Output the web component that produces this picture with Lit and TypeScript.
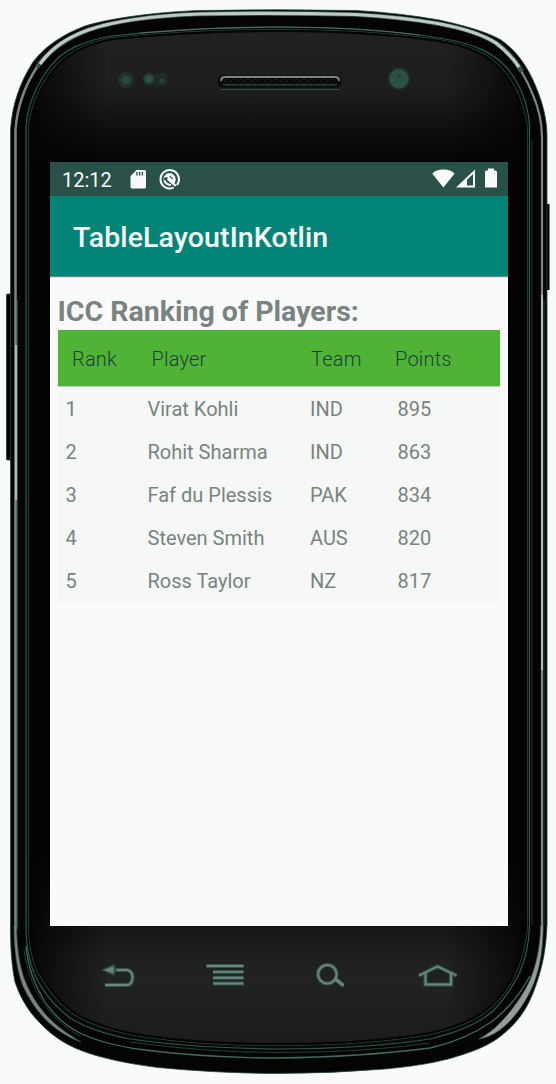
import { LitElement, html, css, svg } from "lit";
import { customElement } from "lit/decorators.js";

interface Player {
  rank: number;
  name: string;
  team: string;
  points: number;
}

const PLAYERS: Player[] = [
  { rank: 1, name: "Virat Kohli", team: "IND", points: 895 },
  { rank: 2, name: "Rohit Sharma", team: "IND", points: 863 },
  { rank: 3, name: "Faf du Plessis", team: "PAK", points: 834 },
  { rank: 4, name: "Steven Smith", team: "AUS", points: 820 },
  { rank: 5, name: "Ross Taylor", team: "NZ", points: 817 },
];

const OUTER =
  "M10.5 130C12 105 20 82 33 62C46 45 64 34 85 26C115 17 160 12 200 10.5Q278 9 356 10.5Q400 13 439 20C462 25 485 31 501 40C520 53 531 73 538 92C543 105 547 120 547 136V925C546 948 543 965 536 985C530 1002 524 1014 511 1027C500 1038 488 1046 470 1052C445 1061 425 1065 385 1069Q330 1073.5 275 1073.5Q215 1073 158 1067.5C130 1064 106 1059 88 1053C70 1047 54 1038 40 1023C28 1011 20 997 15 982C12 967 10.5 950 10.5 930Z";
const RIM =
  "M26 150V128C27 108 35 87 49 68C62 50 83 41 112 36Q190 27 278 27Q370 27 440 38C475 44 493 52 508 69C520 84 528 104 529.5 125V925C529 945 526 959 519 974C511 990 504 1000 493 1011C479 1023 460 1032 430 1039Q365 1049 278 1049Q190 1048 130 1039C104 1034 86 1028 70 1018C53 1005 41 989 34 973C29 960 26.5 950 26 932Z";
const FACE =
  "M30 150V130C31 111 39 90 53 71C66 54 86 44 114 39Q190 31 278 31Q368 31 438 41C472 47 490 56 504 73C517 90 524 110 526 130V920C526 942 521 959 512 978C504 994 495 1003 482 1013C468 1022 452 1028 430 1033Q365 1044 278 1044Q192 1044 130 1033C106 1028 88 1022 73 1012C57 1000 46 985 38 969C32 955 30 942 30 925Z";

@customElement("phone-body")
class PhoneBody extends LitElement {
  static styles = css`
    :host { display: block; width: 556px; height: 1084px; }
    svg { display: block; }
  `;
  render() {
    const slots = Array.from({ length: 16 }, (_, i) => 227 + i * 7);
    return html`<svg width="556" height="1084" viewBox="0 0 556 1084" fill="none">
      <defs>
        <linearGradient id="top" x1="0" y1="30" x2="0" y2="162" gradientUnits="userSpaceOnUse">
          <stop offset="0" stop-color="#202120" /><stop offset=".46" stop-color="#1d1d1d" />
          <stop offset=".75" stop-color="#0f0f0f" /><stop offset="1" stop-color="#040404" />
        </linearGradient>
        <linearGradient id="bottom" x1="0" y1="860" x2="0" y2="1046" gradientUnits="userSpaceOnUse">
          <stop offset="0" stop-color="#040404" /><stop offset=".4" stop-color="#181818" />
          <stop offset=".5" stop-color="#1e1e1e" /><stop offset=".65" stop-color="#202322" />
          <stop offset=".85" stop-color="#1e1e1e" /><stop offset="1" stop-color="#1c1c1c" />
        </linearGradient>
        <linearGradient id="sides" x1="28" y1="0" x2="527" y2="0" gradientUnits="userSpaceOnUse">
          <stop offset="0" stop-color="#030303" /><stop offset=".03" stop-color="#030303" stop-opacity=".7" />
          <stop offset=".16" stop-color="#030303" stop-opacity="0" /><stop offset=".84" stop-color="#030303" stop-opacity="0" />
          <stop offset=".97" stop-color="#030303" stop-opacity=".7" /><stop offset="1" stop-color="#030303" />
        </linearGradient>
        <clipPath id="upper"><rect width="556" height="162" /></clipPath>
        <clipPath id="lower"><rect y="860" width="556" height="224" /></clipPath>
      </defs>
      <rect x="6.5" y="294" width="8" height="166" rx="1" fill="#040404" stroke="#1c3630" stroke-width=".8" />
      <rect x="542" y="204" width="7.5" height="86" rx="1" fill="#040404" />
      <path d="M549.5 204V290" stroke="#777f7c" />
      <path d=${OUTER} fill="#040404" stroke="#26473f" stroke-width=".8" />
      <path d="M15.5 930V130C17 108 24 87 37 67C50 49 67 38 88 30C117 20 160 15 200 14" stroke="#7b8582" stroke-width="2.5" />
      <path d="M542 930V138C542 122 539 109 533 95C526 77 515 58 496 43" stroke="#7b8582" stroke-width="2.2" />
      <path d="M37 67C50 49 67 38 88 30C117 20 160 15.5 200 14Q278 12.5 356 14.5Q400 17 438 23.5C462 28 482 34 496 43Q512 54 522 72" stroke="#35574f" stroke-width="4.6" />
      <path d="M40 64C53 46 69 37 88 30C117 20 160 15.5 200 14Q278 12.5 356 14.5Q400 17 438 23.5C462 28 482 34 496 43Q510 54 519 67" stroke="#c0c8c5" stroke-width="3.2" />
      <path d="M16 345V500M542 295V670" stroke="#b6c0bc" stroke-width="1.8" />
      <path d="M17.5 300V930M544 300V925" stroke="#24463e" />
      <path d="M14 925C14 951 17 971 23 986C29 999 37 1011 47 1021C57 1030 67 1037 81 1042C66 1033 55 1025 46 1015C36 1003 29 992 24 978C19 963 17 948 16.5 925Z" fill="#7b8582" stroke="#345d54" stroke-width=".6" />
      <path d="M540.7 925C540 947 537 963 530 980C523 995 514 1008 501 1022C494 1029 488 1034 479 1039C491 1037 500 1031 510 1021C523 1007 531 992 536 977C541 962 543 946 543.2 925Z" fill="#929c98" stroke="#345d54" stroke-width=".6" />
      <path d="M26 946C28 966 33 982 45 1002C54 1015 66 1026 80 1033C96 1041 112 1045 137 1049Q205 1058 278 1058Q360 1057 430 1048C452 1043 474 1034 491 1022C508 1010 520 994 530 976" stroke="#426a61" stroke-width="1.3" />
      <path d="M24 950C27 973 35 992 48 1009C57 1020 66 1028 80 1036" stroke="#203f38" />
      <path d="M130 1042Q205 1052.5 278 1052.5Q365 1052.5 430 1043" stroke="#203f38" />
      <path d=${RIM} fill="#080a09" stroke="#2c584f" stroke-width="1.2" />
      <path d=${FACE} fill="#030303" stroke="#234a41" stroke-width="4" />
      <path d=${FACE} fill="#030303" stroke="#050505" stroke-width="2.4" />
      <path d=${FACE} fill="url(#top)" clip-path="url(#upper)" />
      <path d=${FACE} fill="url(#bottom)" clip-path="url(#lower)" />
      <path d=${FACE} fill="url(#sides)" stroke="#050505" stroke-width="2" />
      <path d="M532 140V925" stroke="#1e1e1e" stroke-width="1.5" />
      <path d="M140 33Q210 27 278 27Q360 27 420 35" stroke="#64716d" stroke-width=".8" />
      <circle cx="126" cy="80" r="8" fill="#22312d" /><circle cx="126" cy="80" r="4" fill="#294a42" />
      <circle cx="149" cy="79" r="6" fill="#253c36" /><circle cx="149" cy="79" r="3.5" fill="#2a5148" />
      <rect x="155" y="73" width="12" height="13" fill="#202a27" /><circle cx="162" cy="81" r="2.5" fill="#28423b" />
      <circle cx="399" cy="78.5" r="11" fill="#22332f" /><circle cx="399" cy="78.8" r="9.5" fill="#2a5148" />
      <circle cx="399.5" cy="76" r="2.6" fill="#254039" stroke="#31554c" />
      <rect x="218" y="75.5" width="123" height="12" rx="5" fill="#080808" />
      <path d="M221 81Q221 77 225 77H335Q339 77 339 81" stroke="#7b8582" stroke-width="2" />
      <path d="M223 84.8H337M221 89.5H339" stroke="#2a5148" stroke-width="1.2" />
      ${slots.map((x) => svg`<ellipse cx=${x} cy="81.2" rx="2.4" ry="1.9" fill="#000" stroke="#242424" stroke-width=".8" />`)}
    </svg>`;
  }
}

@customElement("status-bar")
class StatusBar extends LitElement {
  static styles = css`
    :host { display: flex; box-sizing: border-box; height: 34px; padding: 0 11px 0 12px; align-items: center; background: #295149; color: #f9fbfa; }
    .clock { font-size: 20px; line-height: 34px; width: 67px; padding-top: 2px; }
    .space { flex: 1; }
    svg { display: block; }
  `;
  render() {
    return html`<span class="clock">12:12</span>
      <svg width="60" height="34" fill="none">
        <path d="M7.5 8H15.5Q17 8 17 9.5V25Q17 26.5 15.5 26.5H3Q1.5 26.5 1.5 25V14Z" fill="#f9fbfa" />
        <path d="M8 10V13.5M10.7 10V13.5M13.4 10V13.5" stroke="#295149" stroke-width="1.4" />
        <path d="M47.9 23A9.2 9.2 0 1 0 44.6 25.6" stroke="#f9fbfa" stroke-width="2.1" />
        <circle cx="40.5" cy="17.3" r="6.2" fill="#f9fbfa" />
        <path d="M35.2 15.6L38 15.2L46 22.7L43.5 25L34.5 18Z" fill="#295149" />
        <path d="M38.6 16.6L46.8 23.8" stroke="#f9fbfa" stroke-width="2.4" />
        <path d="M35.8 18.5Q37 22.8 42 23" stroke="#f9fbfa" stroke-width="1.8" />
        <path d="M40.8 14.2L43.6 17" stroke="#295149" stroke-width="1.2" />
      </svg>
      <span class="space"></span>
      <svg width="65" height="34" fill="#f9fbfa">
        <path d="M0.3 11.8Q3 7.6 11.4 7.4Q20 7.6 22.5 11.8L11.4 25.5Z" />
        <path d="M24 25.5L43 7.5V25.5Z" />
        <path d="M35 23.5V17.8L41 12V23.5Z" fill="#295149" />
        <path d="M53 10Q53 8.5 54.5 8.5H56V6.5H62V8.5H63.5Q65 8.5 65 10V25.5H53Z" />
      </svg>`;
  }
}

@customElement("ranking-table")
class RankingTable extends LitElement {
  static styles = css`
    :host { display: block; color: #79837f; font-size: 20px; }
    .row { display: grid; grid-template-columns: 82px 162.5px 87.5px 1fr; height: 43px; line-height: 43.5px; padding-left: 8px; white-space: nowrap; }
    .head { grid-template-columns: 79.5px 159.5px 84px 1fr; height: 56px; line-height: 58.5px; padding-left: 14.5px; background: #4fb335; color: #203f3b; font-weight: 300; letter-spacing: 0.2px; }
    .body { background: #f5f8f6; padding-top: 1px; border-top: 1px solid #c7cfcb; }
  `;
  render() {
    return html`<div class="row head"><span>Rank</span><span>Player</span><span>Team</span><span>Points</span></div>
      <div class="body">
        ${PLAYERS.map((p) => html`<div class="row"><span>${p.rank}</span><span>${p.name}</span><span>${p.team}</span><span>${p.points}</span></div>`)}
      </div>`;
  }
}

@customElement("nav-keys")
class NavKeys extends LitElement {
  static styles = css`
    :host { display: flex; height: 30px; margin: 35px 0 0 101px; }
    svg { display: block; }
    .edge { stroke: #2d574e; stroke-width: 4; }
    .line { stroke: #71837e; stroke-width: 1.9; }
  `;
  private key(width: number, d: string, fill = "none") {
    return html`<svg width=${width} height="30" fill=${fill}><path class="edge" d=${d} /><path class="line" d=${d} /></svg>`;
  }
  render() {
    return html`
      <svg width="104" height="30" fill="none">
        <path class="edge" d="M10 9H26Q31.5 10 31.5 16.5Q31 24 26 24H4" />
        <path class="line" d="M10 9H26Q31.5 10 31.5 16.5Q31 24 26 24H4" />
        <path d="M0.5 9L13.5 3V6.5H16V11.5H13.5V15Z" fill="#2d574e" /><path d="M3 9L12.5 5.5V12.5Z" fill="#71837e" />
      </svg>
      ${this.key(111, "M1.5 5H38.5M8 10.9H38.5M8 16.8H38.5M8 22.5H38.5")}
      ${this.key(101, "M11.3 4A9.3 9.3 0 1 0 11.3 22.6A9.3 9.3 0 1 0 11.3 4M18.5 18L27.5 25M19.5 17.5L27.5 24")}
      ${this.key(42, "M2 14.5L20.5 5.5L39.5 14.5M8.5 12V23.5H34V12")}`;
  }
}

@customElement("app-root")
class AppRoot extends LitElement {
  static styles = css`
    :host { display: grid; width: 556px; height: 1084px; background: #f9fbfa; font-family: Roboto, sans-serif; overflow: hidden; }
    .body, .front { grid-area: 1 / 1; }
    .front { display: flex; flex-direction: column; z-index: 1; padding-top: 162px; }
    .screen { width: 458px; height: 764px; margin-left: 50px; background: #f9fbfa; }
    .bar { box-sizing: border-box; height: 80px; padding-left: 23px; background: #028577; color: #f9fbfa; font-size: 28.5px; font-weight: 500; line-height: 84px; letter-spacing: 0.13px; white-space: nowrap; }
    .shade { height: 1px; background: #72827d; border-bottom: 1px solid #dfe4e2; }
    .content { padding: 17px 8px 0 7.5px; }
    .title { height: 35px; line-height: 34px; font-size: 28.5px; font-weight: 700; color: #79837f; white-space: nowrap; }
  `;
  render() {
    return html`<phone-body class="body"></phone-body>
      <div class="front">
        <div class="screen">
          <status-bar></status-bar>
          <div class="bar">TableLayoutInKotlin</div>
          <div class="shade"></div>
          <div class="content">
            <div class="title">ICC Ranking of Players:</div>
            <ranking-table></ranking-table>
          </div>
        </div>
        <nav-keys></nav-keys>
      </div>`;
  }
}
